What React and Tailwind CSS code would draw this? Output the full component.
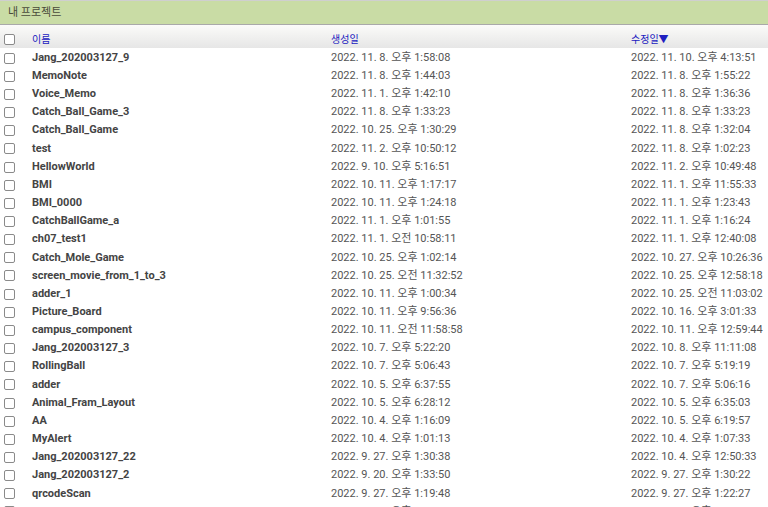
import React from "react";

const projects = [
  ["Jang_202003127_9", "2022. 11. 8. 오후 1:58:08", "2022. 11. 10. 오후 4:13:51"],
  ["MemoNote", "2022. 11. 8. 오후 1:44:03", "2022. 11. 8. 오후 1:55:22"],
  ["Voice_Memo", "2022. 11. 1. 오후 1:42:10", "2022. 11. 8. 오후 1:36:36"],
  ["Catch_Ball_Game_3", "2022. 11. 8. 오후 1:33:23", "2022. 11. 8. 오후 1:33:23"],
  ["Catch_Ball_Game", "2022. 10. 25. 오후 1:30:29", "2022. 11. 8. 오후 1:32:04"],
  ["test", "2022. 11. 2. 오후 10:50:12", "2022. 11. 8. 오후 1:02:23"],
  ["HellowWorld", "2022. 9. 10. 오후 5:16:51", "2022. 11. 2. 오후 10:49:48"],
  ["BMI", "2022. 10. 11. 오후 1:17:17", "2022. 11. 1. 오후 11:55:33"],
  ["BMI_0000", "2022. 10. 11. 오후 1:24:18", "2022. 11. 1. 오후 1:23:43"],
  ["CatchBallGame_a", "2022. 11. 1. 오후 1:01:55", "2022. 11. 1. 오후 1:16:24"],
  ["ch07_test1", "2022. 11. 1. 오전 10:58:11", "2022. 11. 1. 오후 12:40:08"],
  ["Catch_Mole_Game", "2022. 10. 25. 오후 1:02:14", "2022. 10. 27. 오후 10:26:36"],
  ["screen_movie_from_1_to_3", "2022. 10. 25. 오전 11:32:52", "2022. 10. 25. 오후 12:58:18"],
  ["adder_1", "2022. 10. 11. 오후 1:00:34", "2022. 10. 25. 오전 11:03:02"],
  ["Picture_Board", "2022. 10. 11. 오후 9:56:36", "2022. 10. 16. 오후 3:01:33"],
  ["campus_component", "2022. 10. 11. 오전 11:58:58", "2022. 10. 11. 오후 12:59:44"],
  ["Jang_202003127_3", "2022. 10. 7. 오후 5:22:20", "2022. 10. 8. 오후 11:11:08"],
  ["RollingBall", "2022. 10. 7. 오후 5:06:43", "2022. 10. 7. 오후 5:19:19"],
  ["adder", "2022. 10. 5. 오후 6:37:55", "2022. 10. 7. 오후 5:06:16"],
  ["Animal_Fram_Layout", "2022. 10. 5. 오후 6:28:12", "2022. 10. 5. 오후 6:35:03"],
  ["AA", "2022. 10. 4. 오후 1:16:09", "2022. 10. 5. 오후 6:19:57"],
  ["MyAlert", "2022. 10. 4. 오후 1:01:13", "2022. 10. 4. 오후 1:07:33"],
  ["Jang_202003127_22", "2022. 9. 27. 오후 1:30:38", "2022. 10. 4. 오후 12:50:33"],
  ["Jang_202003127_2", "2022. 9. 20. 오후 1:33:50", "2022. 9. 27. 오후 1:30:22"],
  ["qrcodeScan", "2022. 9. 27. 오후 1:19:48", "2022. 9. 27. 오후 1:22:27"],
  ["sample", "2022. 9. 20. 오후 1:10:02", "2022. 9. 20. 오후 1:12:40"],
];

function Box() {
  return (
    <span className="block w-[11px] h-[11px] rounded-[2px] border border-[#8a8a8a] bg-white" />
  );
}

export default function App() {
  return (
    <div
      className="w-[768px] h-[507px] overflow-hidden bg-white text-[11px] whitespace-nowrap"
      style={{ fontFamily: 'Roboto, "Noto Sans CJK KR", sans-serif' }}
    >
      {/* title bar */}
      <div className="h-[25px] border-t border-[#cfcfcf] border-b border-b-[#a9a9a9] bg-[#c9dca5] flex items-center pl-[8px] pt-[2px] text-[11px] text-[#4a4a3a]">
        내 프로젝트
      </div>

      {/* header row */}
      <div className="h-[23px] pt-[5px] flex items-center bg-gradient-to-b from-[#fbfbf9] to-[#e6e6e6] text-[10px] text-[#2020c0]">
        <div className="w-[32px] pl-[4px]">
          <Box />
        </div>
        <div className="w-[299px]">이름</div>
        <div className="w-[300px]">생성일</div>
        <div className="flex-1">수정일▼</div>
      </div>

      {/* rows */}
      <div className="pt-[1px]">
        {projects.map(([name, created, modified]) => (
          <div key={name} className="h-[18.17px] flex items-center">
            <div className="w-[32px] pl-[4px]">
              <Box />
            </div>
            <div className="w-[299px] font-bold text-[#444]">{name}</div>
            <div className="w-[300px] text-[#555]">{created}</div>
            <div className="flex-1 text-[#555]">{modified}</div>
          </div>
        ))}
      </div>
    </div>
  );
}
